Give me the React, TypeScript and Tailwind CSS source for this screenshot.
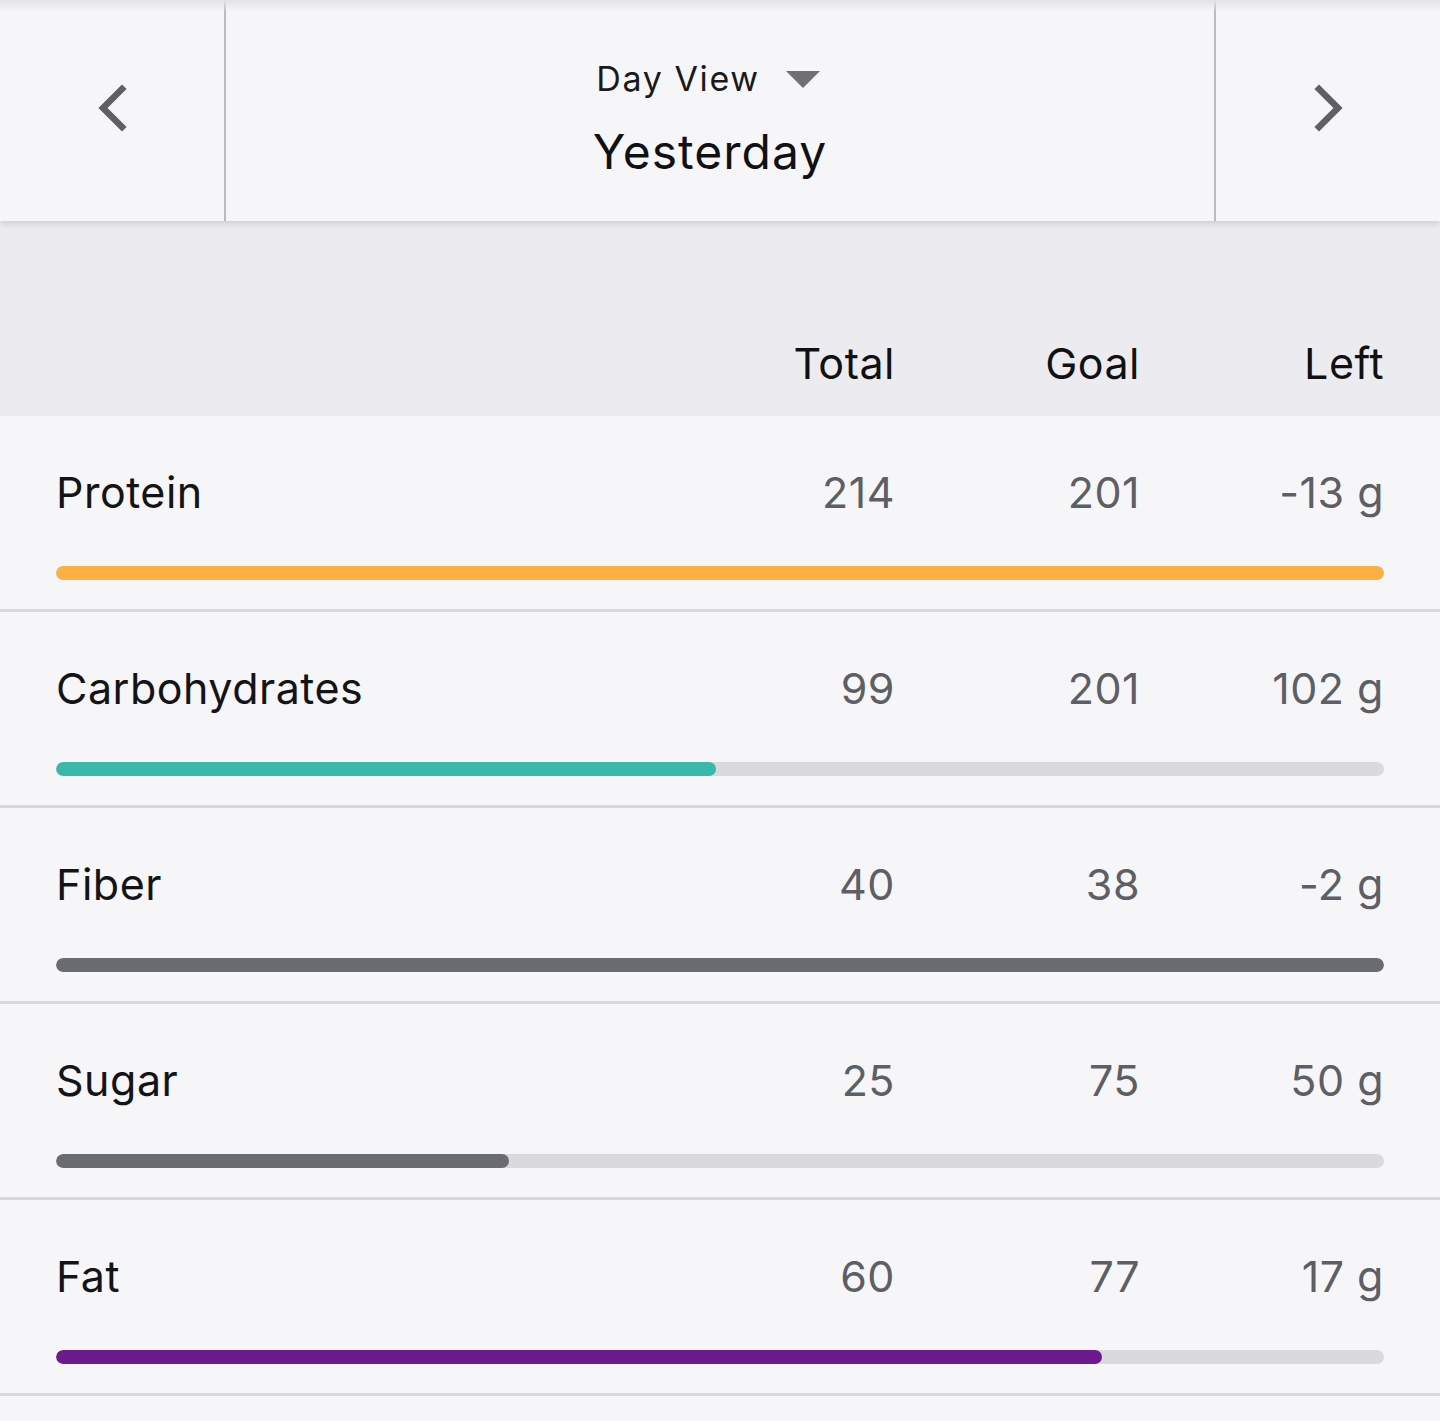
import { ReactNode } from 'react';

type Nutrient = {
  name: string;
  total: number;
  goal: number;
  left: string;
  pct: number;
  color: string;
};

const nutrients: Nutrient[] = [
  { name: 'Protein', total: 214, goal: 201, left: '-13 g', pct: 100, color: '#fbb044' },
  { name: 'Carbohydrates', total: 99, goal: 201, left: '102 g', pct: 49.7, color: '#3ab8aa' },
  { name: 'Fiber', total: 40, goal: 38, left: '-2 g', pct: 100, color: '#6b6b72' },
  { name: 'Sugar', total: 25, goal: 75, left: '50 g', pct: 34.1, color: '#6b6b72' },
  { name: 'Fat', total: 60, goal: 77, left: '17 g', pct: 78.8, color: '#6c1a8e' },
];

function Chevron({ dir }: { dir: 'left' | 'right' }) {
  return (
    <svg width="34" height="48" viewBox="0 0 34 48" fill="none">
      <path
        d={dir === 'left' ? 'M26 5 L7 24 L26 43' : 'M8 5 L27 24 L8 43'}
        stroke="#5f5f66"
        strokeWidth="6.5"
        strokeLinecap="square"
      />
    </svg>
  );
}

function Cols({ children, className }: { children: ReactNode; className?: string }) {
  return (
    <div className={`grid grid-cols-[1fr_245px_245px_244px] items-center pl-[56px] pr-[56px] ${className ?? ''}`}>
      {children}
    </div>
  );
}

export default function App() {
  return (
    <div className="min-h-[1421px] w-full bg-[#f6f6f9] font-['Inter','Noto_Sans',sans-serif] tracking-[0.5px] overflow-hidden">
      <header className="relative z-10 flex h-[221px] bg-[#f6f6f9] shadow-[0_3px_6px_rgba(0,0,0,0.12)]">
        <div className="pointer-events-none absolute inset-x-0 top-0 h-3 bg-gradient-to-b from-[#e4e4e8] to-transparent" />
        <button className="flex w-[226px] items-center justify-center border-r-2 border-[#bcbcc0] pb-[6px] pl-[2px]">
          <Chevron dir="left" />
        </button>
        <div className="flex flex-1 flex-col items-center pt-[56px] pr-[20px]">
          <div className="flex items-center gap-[26px] pr-[4px]">
            <span className="text-[34px] leading-[46px] tracking-[1.6px] text-[#1a1a1c]">Day View</span>
            <svg width="34" height="18" viewBox="0 0 34 18" className="mt-[2px]">
              <polygon points="0,0 34,0 17,17" fill="#6f6f74" />
            </svg>
          </div>
          <span className="mt-[19px] text-[48px] leading-[62px] tracking-[1px] text-[#111113]">Yesterday</span>
        </div>
        <button className="flex w-[226px] items-center justify-center border-l-2 border-[#bcbcc0] pb-[6px]">
          <Chevron dir="right" />
        </button>
      </header>

      <div className="h-[195px] bg-[#ebebf0] pt-[114px]">
        <Cols>
          <span />
          <span className="text-right text-[43px] leading-[56px] text-[#111]">Total</span>
          <span className="text-right text-[43px] leading-[56px] text-[#111]">Goal</span>
          <span className="text-right text-[43px] leading-[56px] text-[#111]">Left</span>
        </Cols>
      </div>

      {nutrients.map((n) => (
        <div key={n.name} className="h-[196px] border-b-[3px] border-[#d8d8dc] pt-[48px]">
          <Cols>
            <span className="text-[43px] leading-[56px] text-[#141416]">{n.name}</span>
            <span className="text-right text-[43px] leading-[56px] text-[#5e5e65]">{n.total}</span>
            <span className="text-right text-[43px] leading-[56px] text-[#5e5e65]">{n.goal}</span>
            <span className="text-right text-[43px] leading-[56px] text-[#5e5e65]">{n.left}</span>
          </Cols>
          <div className="mt-[46px] ml-[56px] mr-[56px] h-[14px] overflow-hidden rounded-full bg-[#d9d9de]">
            <div className="h-full rounded-full" style={{ width: `${n.pct}%`, backgroundColor: n.color }} />
          </div>
        </div>
      ))}
    </div>
  );
}
